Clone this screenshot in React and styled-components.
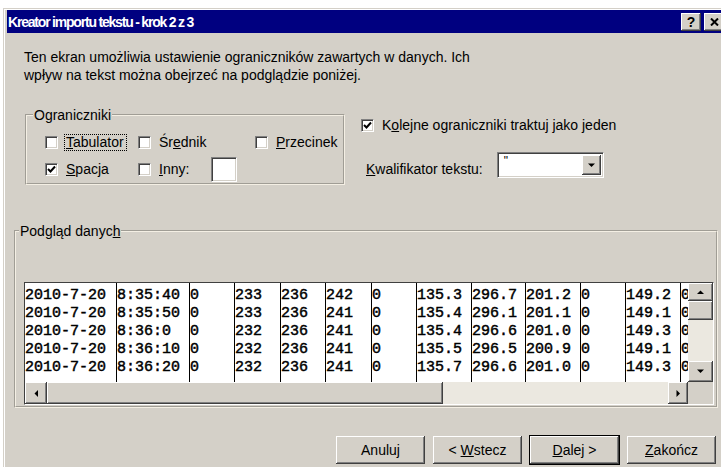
import styled, { createGlobalStyle } from 'styled-components';

const FACE = '#d4d0c8';

const GlobalStyle = createGlobalStyle`
  html, body {
    margin: 0;
    padding: 0;
    background: #fff;
    overflow: hidden;
  }
  body {
    font-family: "Liberation Sans", Arial, sans-serif;
    font-size: 14px;
    color: #000;
  }
  #root {
    width: 721px;
    height: 467px;
    overflow: hidden;
  }
`;

// classic raised / sunken bevels
const raised = `
  box-shadow: inset -1px -1px 0 #404040, inset 1px 1px 0 #fff,
    inset -2px -2px 0 #808080;
`;
const sunken = `
  border: 1px solid;
  border-color: #808080 #fff #fff #808080;
  box-shadow: inset 1px 1px 0 #404040, inset -1px -1px 0 ${FACE};
`;

const Window = styled.div`
  margin: 8px 0 0 3px;
  width: 722px;
  height: 459px;
  box-sizing: border-box;
  background: ${FACE};
  border-top: 1px solid ${FACE};
  border-left: 1px solid ${FACE};
  box-shadow: inset 1px 1px 0 #fff;
  padding: 1px 0 0 3px;
  display: flex;
  flex-direction: column;
`;

const TitleBar = styled.div`
  height: 23px;
  flex: none;
  background: #000080;
  color: #fff;
  display: flex;
  align-items: center;
  padding-left: 1px;
  font-weight: bold;
  font-size: 14px;
  letter-spacing: -1.2px;
`;

const Caption = styled.span`
  flex: 1;
`;

const CaptionButton = styled.span`
  width: 20px;
  height: 18px;
  margin-right: ${p => p.$gap}px;
  background: ${FACE};
  ${raised}
  display: flex;
  align-items: center;
  justify-content: center;
  color: #000;
  font-size: 14px;
  font-weight: bold;
  letter-spacing: 0;
`;

const Intro = styled.p`
  margin: 15px 0 0 17px;
  line-height: 18px;
`;

const OptionsRow = styled.div`
  display: flex;
  align-items: flex-start;
  margin: 23px 0 0 18px;
`;

const Group = styled.fieldset`
  margin: ${p => p.$margin || 0};
  box-sizing: border-box;
  width: ${p => p.$width || 'auto'};
  border: 2px groove #f4efe4;
  padding: ${p => p.$pad};
  min-width: 0;
`;

const Legend = styled.legend`
  padding: 0 1px;
  line-height: 16px;
`;

const DelimGrid = styled.div`
  display: grid;
  grid-template-columns: 93px 117px auto;
  grid-auto-rows: 27px;
  margin-left: 12px;
`;

const Option = styled.div`
  display: flex;
  align-items: center;
  gap: 6px;
`;

const Box = styled.span`
  width: 13px;
  height: 13px;
  box-sizing: border-box;
  background: #fff;
  ${sunken}
  display: inline-flex;
  align-items: center;
  justify-content: center;
  flex: none;
`;

const Label = styled.span`
  padding: 0 2px 0 1px;
  line-height: 15px;
  border: 1px ${p => (p.$focus ? 'dotted #000' : 'solid transparent')};
  white-space: nowrap;
`;

const Key = styled.span`
  text-decoration: underline;
`;

const SmallInput = styled.span`
  width: 26px;
  height: 25px;
  box-sizing: border-box;
  margin-left: 13px;
  background: #fff;
  ${sunken}
`;

const Side = styled.div`
  display: flex;
  flex-direction: column;
  margin-left: 16px;
  padding-top: 10px;
`;

const QualifierRow = styled.div`
  display: flex;
  align-items: flex-start;
  margin: 18px 0 0 5px;
`;

const QualifierLabel = styled.span`
  margin-top: 9px;
  line-height: 16px;
`;

const Combo = styled.div`
  width: 107px;
  height: 26px;
  box-sizing: border-box;
  margin-left: 14px;
  background: #fff;
  ${sunken}
  display: flex;
  padding: 2px;
`;

const ComboValue = styled.span`
  flex: 1;
  padding-left: 4px;
  font-size: 12px;
  line-height: 12px;
  color: #000;
`;

const ComboButton = styled.span`
  width: 19px;
  background: ${FACE};
  ${raised}
  display: flex;
  align-items: center;
  justify-content: center;
`;

const PreviewFrame = styled.div`
  margin: 43px 2px 1px 5px;
  border: 1px solid;
  border-color: #404040 #fff #fff #404040;
  display: grid;
  grid-template-columns: 1fr 25px;
  grid-template-rows: 99px 22px;
`;

const DataArea = styled.div`
  background: #fff;
  display: flex;
  overflow: hidden;
  font-family: "Liberation Mono", "Courier New", monospace;
  font-size: 15px;
  color: #000;
  -webkit-text-stroke: 0.45px #000;
`;

const Column = styled.div`
  flex: none;
  box-sizing: border-box;
  padding-top: 4px;
  border-left: ${p => (p.$first ? 'none' : '1px solid #000')};
  white-space: pre;
  line-height: 18px;
`;

const VScroll = styled.div`
  display: flex;
  flex-direction: column;
`;

const HScroll = styled.div`
  display: flex;
`;

const ScrollButton = styled.span`
  flex: none;
  width: ${p => p.$w || 'auto'};
  height: ${p => p.$h || 'auto'};
  background: ${FACE};
  ${raised}
  display: flex;
  align-items: center;
  justify-content: center;
`;

const Track = styled.span`
  flex: 1;
  background: #ebe8e0;
`;

const Corner = styled.span`
  background: ${FACE};
`;

const ButtonRow = styled.div`
  display: flex;
  justify-content: flex-end;
  gap: 6px;
  margin-top: 27px;
  padding-right: 8px;
`;

const Button = styled.span`
  width: 91px;
  height: 30px;
  box-sizing: border-box;
  background: ${FACE};
  ${raised}
  border: 1px solid ${p => (p.$default ? '#000' : 'transparent')};
  display: flex;
  align-items: center;
  justify-content: center;
  white-space: pre;
`;

const Check = () => (
  <svg width="9" height="9" viewBox="0 0 9 9">
    <polyline points="1,4 3.5,6.5 8,1.5" fill="none" stroke="#000" strokeWidth="2" />
  </svg>
);

const Arrow = ({ dir }) => {
  const pts = {
    up: '0,4 7,4 3.5,0.5',
    down: '0,0.5 7,0.5 3.5,4',
    left: '4,0 4,7 0.5,3.5',
    right: '0.5,0 0.5,7 4,3.5',
  }[dir];
  const vertical = dir === 'up' || dir === 'down';
  return (
    <svg width={vertical ? 7 : 5} height={vertical ? 5 : 7}>
      <polygon points={pts} fill="#000" />
    </svg>
  );
};

const CloseGlyph = () => (
  <svg width="9" height="8" viewBox="0 0 9 8">
    <path d="M1 0.5 L8 7.5 M8 0.5 L1 7.5" stroke="#000" strokeWidth="2" />
  </svg>
);

const CheckOption = ({ checked, focus, children }) => (
  <Option>
    <Box>{checked && <Check />}</Box>
    <Label $focus={focus}>{children}</Label>
  </Option>
);

const rows = [
  ['2010-7-20', '8:35:40', '0', '233', '236', '242', '0', '135.3', '296.7', '201.2', '0', '149.2', '0'],
  ['2010-7-20', '8:35:50', '0', '233', '236', '241', '0', '135.4', '296.1', '201.1', '0', '149.1', '0'],
  ['2010-7-20', '8:36:0', '0', '232', '236', '241', '0', '135.4', '296.6', '201.0', '0', '149.3', '0'],
  ['2010-7-20', '8:36:10', '0', '232', '236', '241', '0', '135.5', '296.5', '200.9', '0', '149.1', '0'],
  ['2010-7-20', '8:36:20', '0', '232', '236', '241', '0', '135.7', '296.6', '201.0', '0', '149.3', '0'],
];
const widths = [91, 73, 45, 46, 45, 46, 45, 55, 54, 55, 45, 55, 40];

export default function App() {
  return (
    <>
      <GlobalStyle />
      <Window>
        <TitleBar>
          <Caption>Kreator importu tekstu - krok 2 z 3</Caption>
          <CaptionButton $gap={3}>?</CaptionButton>
          <CaptionButton $gap={1}>
            <CloseGlyph />
          </CaptionButton>
        </TitleBar>

        <Intro>
          Ten ekran umożliwia ustawienie ograniczników zawartych w danych. Ich
          <br />
          wpływ na tekst można obejrzeć na podglądzie poniżej.
        </Intro>

        <OptionsRow>
          <Group $width="320px" $pad="6px 0 0 6px">
            <Legend>Ograniczniki</Legend>
            <DelimGrid>
              <CheckOption focus>
                <Key>T</Key>abulator
              </CheckOption>
              <CheckOption>
                Śr<Key>e</Key>dnik
              </CheckOption>
              <CheckOption>
                <Key>P</Key>rzecinek
              </CheckOption>
              <CheckOption checked>
                <Key>S</Key>pacja
              </CheckOption>
              <Option>
                <Box />
                <Label>
                  <Key>I</Key>nny:
                </Label>
                <SmallInput />
              </Option>
            </DelimGrid>
          </Group>

          <Side>
            <CheckOption checked>
              K<Key>o</Key>lejne ograniczniki traktuj jako jeden
            </CheckOption>
            <QualifierRow>
              <QualifierLabel>
                <Key>K</Key>walifikator tekstu:
              </QualifierLabel>
              <Combo>
                <ComboValue>"</ComboValue>
                <ComboButton>
                  <Arrow dir="down" />
                </ComboButton>
              </Combo>
            </QualifierRow>
          </Side>
        </OptionsRow>

        <Group $pad="0 0 0 3px" $margin="38px 7px 0 7px">
          <Legend>
            Podgląd danyc<Key>h</Key>
          </Legend>
          <PreviewFrame>
            <DataArea>
              {widths.map((w, c) => (
                <Column key={c} $first={c === 0} style={{ width: w }}>
                  {rows.map(r => r[c]).join('\n')}
                </Column>
              ))}
            </DataArea>
            <VScroll>
              <ScrollButton $h="18px">
                <Arrow dir="up" />
              </ScrollButton>
              <ScrollButton $h="19px" />
              <Track />
              <ScrollButton $h="21px">
                <Arrow dir="down" />
              </ScrollButton>
            </VScroll>
            <HScroll>
              <ScrollButton $w="22px">
                <Arrow dir="left" />
              </ScrollButton>
              <ScrollButton $w="396px" />
              <Track />
              <ScrollButton $w="20px">
                <Arrow dir="right" />
              </ScrollButton>
            </HScroll>
            <Corner />
          </PreviewFrame>
        </Group>

        <ButtonRow>
          <Button>
            <span>Anuluj</span>
          </Button>
          <Button>
            <span>
              &lt; <Key>W</Key>stecz
            </span>
          </Button>
          <Button $default>
            <span>
              <Key>D</Key>alej &gt;
            </span>
          </Button>
          <Button>
            <span>
              <Key>Z</Key>akończ
            </span>
          </Button>
        </ButtonRow>
      </Window>
    </>
  );
}
